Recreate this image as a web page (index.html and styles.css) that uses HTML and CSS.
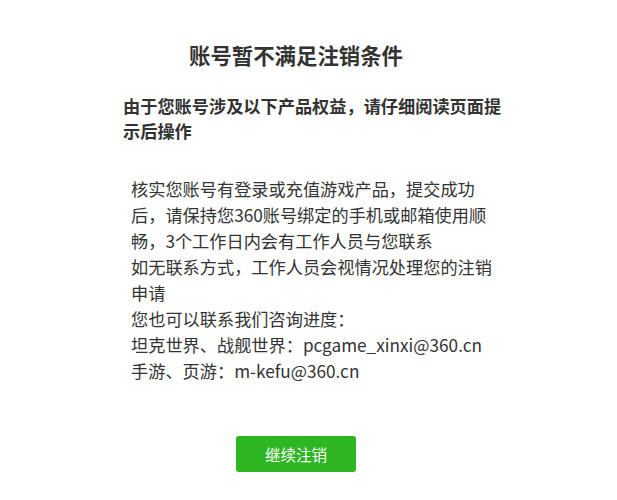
FILE: index.html
```html
<!DOCTYPE html>
<html lang="zh-CN">

<head>
    <meta charset="UTF-8">
    <meta name="viewport" content="width=device-width, initial-scale=1.0">
    <title>账号注销</title>
    <link rel="stylesheet" href="styles.css">
</head>

<body>
    <main class="cancel-page">
        <h1 class="cancel-title">账号暂不满足注销条件</h1>
        <p class="cancel-tip">由于您账号涉及以下产品权益，请仔细阅读页面提示后操作</p>
        <div class="cancel-info">
            <p>核实您账号有登录或充值游戏产品，提交成功后，请保持您360账号绑定的手机或邮箱使用顺畅，3个工作日内会有工作人员与您联系</p>
            <p>如无联系方式，工作人员会视情况处理您的注销申请</p>
            <p>您也可以联系我们咨询进度：</p>
            <p>坦克世界、战舰世界：pcgame_xinxi@360.cn</p>
            <p>手游、页游：m-kefu@360.cn</p>
        </div>
        <div class="cancel-action">
            <button type="button" class="btn-continue">继续注销</button>
        </div>
    </main>
</body>

</html>
```

FILE: styles.css
```css
body {
    margin: 0;
    padding: 0;
    background: #fff;
    color: #333;
    font-family: "Noto Sans CJK SC", "Noto Sans", sans-serif;
}

.cancel-page {
    width: 592px;
    padding-top: 40px;
}

.cancel-title {
    margin: 0;
    font-size: 21.4px;
    line-height: 30px;
    font-weight: bold;
    text-align: center;
}

.cancel-tip {
    margin: 23px 0 0 123px;
    width: 386px;
    font-size: 17.2px;
    line-height: 25px;
    font-weight: bold;
}

.cancel-info {
    margin: 33px 0 0 131px;
    width: 368px;
    font-size: 17.2px;
    line-height: 26px;
}

.cancel-info p {
    margin: 0;
}

.cancel-action {
    margin-top: 52px;
    text-align: center;
}

.btn-continue {
    width: 120px;
    height: 36px;
    border: none;
    border-radius: 3px;
    background-color: #2db522;
    color: #fff;
    font-family: inherit;
    font-size: 15.5px;
    cursor: pointer;
}

.btn-continue:hover {
    background-color: #28a31e;
}
```
